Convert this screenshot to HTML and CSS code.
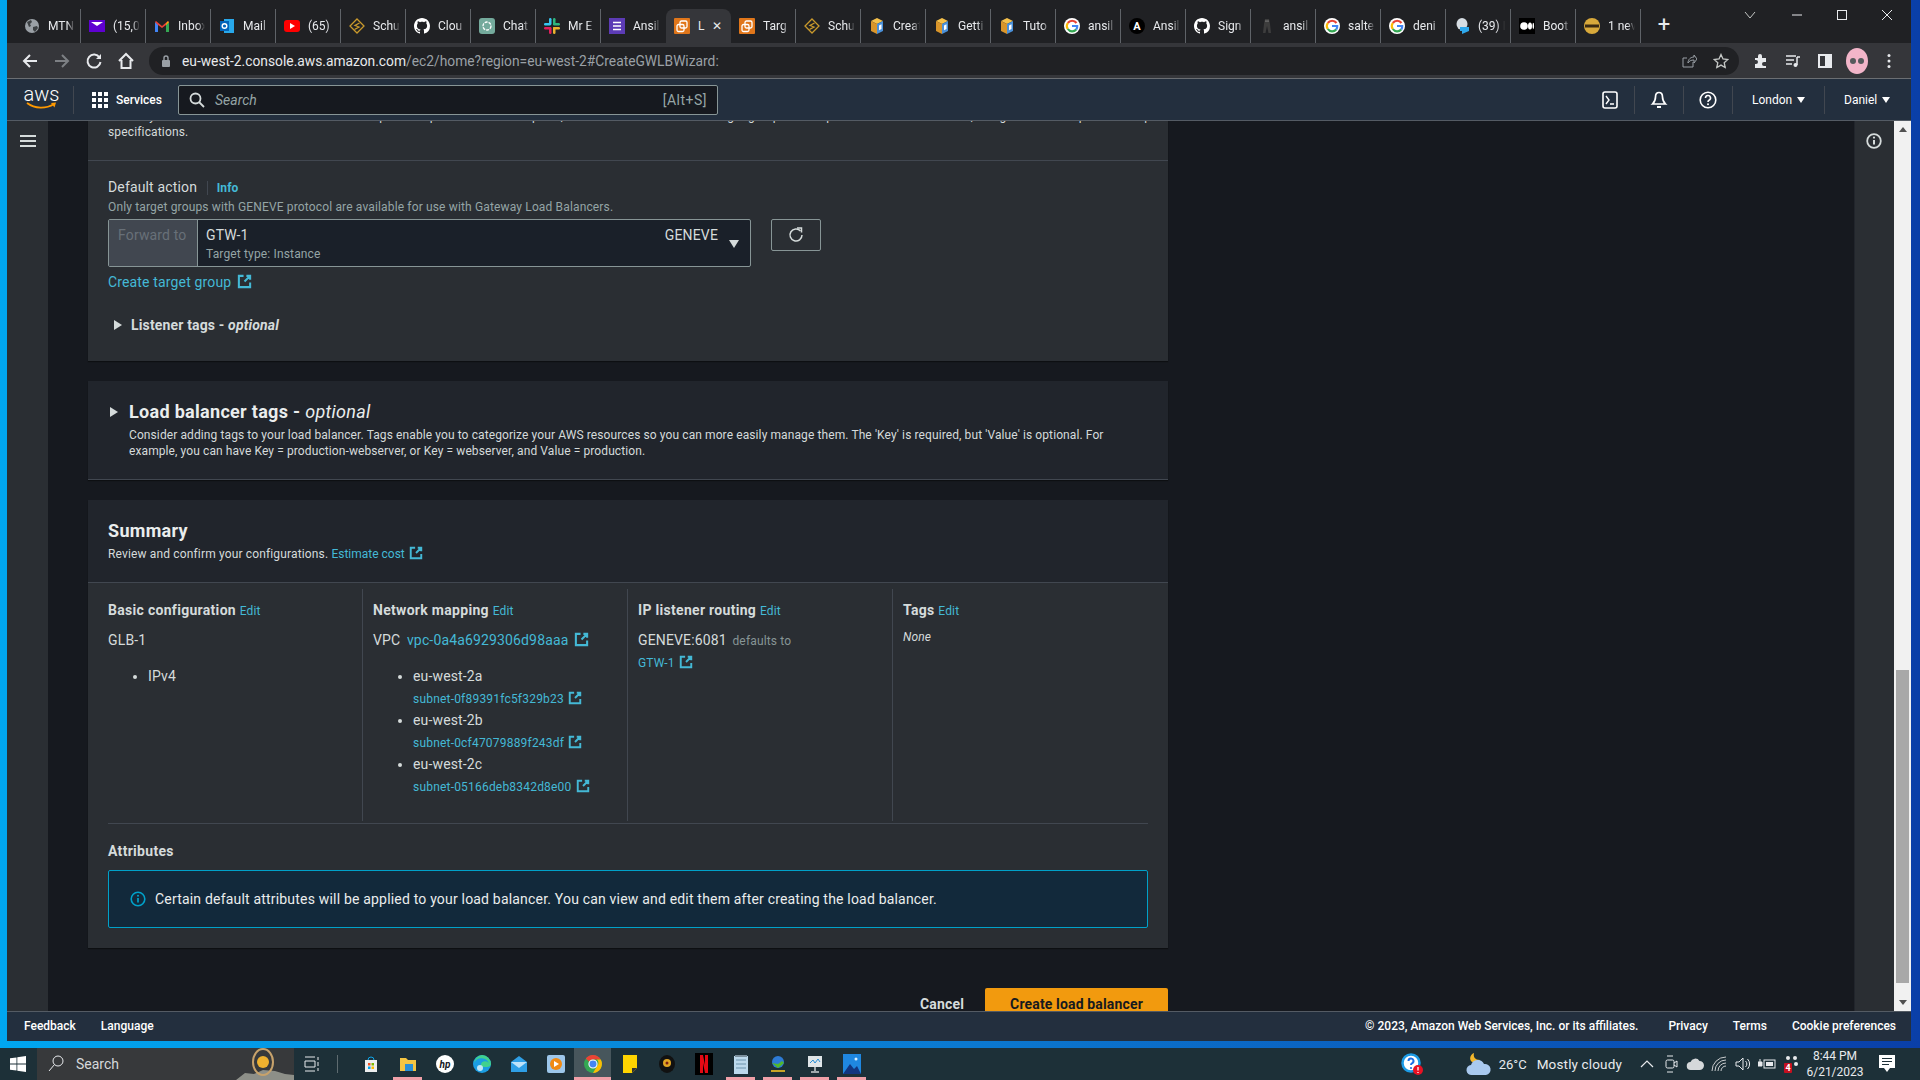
FILE: index.html
```html
<!DOCTYPE html>
<html lang="en">
<head>
	<meta charset="utf-8" />
	<title>Create load balancer</title>
	<link rel="stylesheet" href="styles.css">
</head>
<body>

	<!-- shared icons -->
	<svg class="defs" aria-hidden="true">
		<symbol id="ext" viewBox="0 0 16 16"><path d="M7 2H2v12h12V9M10 2h4v4M14 2L8 8" fill="none" stroke="currentColor" stroke-width="2.200"/></symbol>
		<symbol id="globe" viewBox="0 0 16 16"><circle cx="8" cy="8" r="7" fill="#9aa0a6"/><path d="M3 4l4-2 1 2-2 2 1 2-2 1zM9 9l4-1 1 2-3 4-2-2z" fill="#3c4043"/></symbol>
		<symbol id="yahoo" viewBox="0 0 16 16"><rect y="2" width="16" height="12" fill="#5f01d1"/><path d="M2 4h12L8 8z" fill="#fff"/></symbol>
		<symbol id="gmail" viewBox="0 0 16 16"><path d="M1 14V4l3 2v8z" fill="#4285f4"/><path d="M15 14V4l-3 2v8z" fill="#34a853"/><path d="M1 4l1-1 6 5 6-5 1 1-3 3-4 3-4-3z" fill="#ea4335"/><path d="M12 6l1.500-2.500L15 4l-3 3z" fill="#fbbc04"/></symbol>
		<symbol id="outlook" viewBox="0 0 16 16"><rect x="5" y="1" width="10" height="14" fill="#28a8ea"/><rect x="1" y="3" width="9" height="10" fill="#0364b8"/><circle cx="5.500" cy="8" r="2.300" fill="none" stroke="#fff" stroke-width="1.400"/></symbol>
		<symbol id="yt" viewBox="0 0 16 16"><rect y="2" width="16" height="12" rx="3" fill="#f00"/><path d="M6 5l5 3-5 3z" fill="#fff"/></symbol>
		<symbol id="schu" viewBox="0 0 16 16"><path d="M8 1l7 7-7 7-7-7z" fill="none" stroke="#c9992c" stroke-width="1.300"/><path d="M10.500 5L6 7.500l4 1.500-4.500 2.500" fill="none" stroke="#c9992c" stroke-width="1.300"/></symbol>
		<symbol id="github" viewBox="0 0 16 16"><path fill="#fff" d="M8 0C3.58 0 0 3.58 0 8c0 3.54 2.29 6.530 5.470 7.590.4.070.55-.17.55-.38 0-.19-.01-.82-.01-1.490-2.010.37-2.530-.49-2.690-.94-.09-.23-.48-.94-.82-1.130-.28-.15-.68-.52-.01-.53.63-.01 1.080.58 1.230.82.72 1.210 1.870.87 2.330.66.070-.52.28-.87.51-1.070-1.780-.2-3.640-.89-3.640-3.950 0-.87.31-1.590.82-2.150-.08-.2-.36-1.020.08-2.120 0 0 .67-.21 2.200.82.64-.18 1.320-.27 2-.27s1.360.09 2 .27c1.530-1.040 2.200-.82 2.200-.82.44 1.100.16 1.920.08 2.120.51.56.82 1.270.82 2.150 0 3.070-1.870 3.750-3.650 3.950.29.25.54.73.54 1.480 0 1.070-.01 1.930-.01 2.200 0 .21.15.46.55.38A8.010 8.010 0 0 0 16 8c0-4.420-3.580-8-8-8z"/></symbol>
		<symbol id="chat" viewBox="0 0 16 16"><rect width="16" height="16" rx="3" fill="#74aa9c"/><circle cx="8" cy="8" r="4" fill="none" stroke="#fff" stroke-width="1.300" stroke-dasharray="3 1"/></symbol>
		<symbol id="slack" viewBox="0 0 16 16"><rect x="5" y="0" width="2.500" height="7" rx="1.200" fill="#36c5f0"/><rect x="0" y="5" width="7" height="2.500" rx="1.200" fill="#36c5f0"/><rect x="9" y="0" width="2.500" height="7" rx="1.200" fill="#2eb67d"/><rect x="9" y="5" width="7" height="2.500" rx="1.200" fill="#2eb67d"/><rect x="9" y="9" width="2.500" height="7" rx="1.200" fill="#ecb22e"/><rect x="9" y="9" width="7" height="2.500" rx="1.200" fill="#ecb22e"/><rect x="5" y="9" width="2.500" height="7" rx="1.200" fill="#e01e5a"/><rect x="0" y="9" width="7" height="2.500" rx="1.200" fill="#e01e5a"/></symbol>
		<symbol id="list" viewBox="0 0 16 16"><rect width="16" height="16" fill="#5c3bb5"/><path d="M4 4.500h8M4 8h8M4 11.500h8" stroke="#fff" stroke-width="1.600"/></symbol>
		<symbol id="aws" viewBox="0 0 16 16"><rect width="16" height="16" rx="1" fill="#e0761a"/><rect x="6" y="3" width="7" height="7" rx="1.500" fill="none" stroke="#fff" stroke-width="1.300"/><rect x="3" y="6.500" width="7" height="7" rx="1.500" fill="none" stroke="#fff" stroke-width="1.300"/></symbol>
		<symbol id="box" viewBox="0 0 16 16"><path d="M2 3l6-3 6 3-6 3z" fill="#f5c14b"/><path d="M2 3l6 3v10l-6-3z" fill="#d9952a"/><path d="M14 3L8 6v10l6-3z" fill="#4a90d9"/><path d="M10 7.500l2.500-1.200V11L10 12.200z" fill="#fff"/></symbol>
		<symbol id="google" viewBox="0 0 16 16"><circle cx="8" cy="8" r="8" fill="#fff"/><path d="M12.500 5A5.300 5.300 0 0 0 3.800 5" fill="none" stroke="#ea4335" stroke-width="2.200"/><path d="M3.800 5a5.300 5.300 0 0 0 0 6" fill="none" stroke="#fbbc04" stroke-width="2.200"/><path d="M3.800 11a5.300 5.300 0 0 0 8.400.5" fill="none" stroke="#34a853" stroke-width="2.200"/><path d="M8 8h5.200a5.300 5.300 0 0 1-1 3.500" fill="none" stroke="#4285f4" stroke-width="2.200"/></symbol>
		<symbol id="figure" viewBox="0 0 16 16"><path d="M6 1h4l1 5 1 9H9.500L8 8l-1.500 7H4l1-9z" fill="#3d3d3d"/><circle cx="7" cy="3" r=".6" fill="#ccc"/><circle cx="9" cy="3" r=".6" fill="#ccc"/></symbol>
		<symbol id="bubble" viewBox="0 0 16 16"><ellipse cx="8" cy="6" rx="5.500" ry="6" fill="#d6dde3"/><path d="M6 9h9v4l-7 3v-3H6z" fill="#2fa8ec"/></symbol>
		<symbol id="medium" viewBox="0 0 16 16"><rect width="16" height="16" fill="#000"/><circle cx="5" cy="8" r="3.800" fill="#fff"/><ellipse cx="11" cy="8" rx="2" ry="3.600" fill="#fff"/><ellipse cx="14.300" cy="8" rx=".8" ry="3.200" fill="#fff"/></symbol>
		<symbol id="coin" viewBox="0 0 16 16"><circle cx="8" cy="8" r="8" fill="#d8a93b"/><rect x="1" y="6.500" width="14" height="3" fill="#3a2a12"/></symbol>
		<symbol id="chrome" viewBox="0 0 16 16"><circle cx="8" cy="8" r="8" fill="#34a853"/><path d="M8 0a8 8 0 0 1 6.900 4H8a4 4 0 0 0-3.500 2L1.600 3A8 8 0 0 1 8 0z" fill="#ea4335"/><path d="M14.900 4A8 8 0 0 1 8 16l3.500-6a4 4 0 0 0 0-6z" fill="#fbbc04"/><circle cx="8" cy="8" r="3.600" fill="#4285f4" stroke="#fff" stroke-width="1"/></symbol>
	</svg>

	<div class="window">

		<!-- browser tabs -->
		<div class="tabstrip">
			<div class="tab"><svg class="fav"><use href="#globe"/></svg><span>MTN</span></div>
			<div class="tab"><svg class="fav"><use href="#yahoo"/></svg><span>(15,0</span></div>
			<div class="tab"><svg class="fav"><use href="#gmail"/></svg><span>Inbox</span></div>
			<div class="tab"><svg class="fav"><use href="#outlook"/></svg><span>Mail</span></div>
			<div class="tab"><svg class="fav"><use href="#yt"/></svg><span>(65)</span></div>
			<div class="tab"><svg class="fav"><use href="#schu"/></svg><span>Schu</span></div>
			<div class="tab"><svg class="fav"><use href="#github"/></svg><span>Clou</span></div>
			<div class="tab"><svg class="fav"><use href="#chat"/></svg><span>Chat</span></div>
			<div class="tab"><svg class="fav"><use href="#slack"/></svg><span>Mr E</span></div>
			<div class="tab tab-before"><svg class="fav"><use href="#list"/></svg><span>Ansil</span></div>
			<div class="tab tab-active"><svg class="fav"><use href="#aws"/></svg><span>L</span><b class="tab-close">✕</b></div>
			<div class="tab"><svg class="fav"><use href="#aws"/></svg><span>Targ</span></div>
			<div class="tab"><svg class="fav"><use href="#schu"/></svg><span>Schu</span></div>
			<div class="tab"><svg class="fav"><use href="#box"/></svg><span>Creat</span></div>
			<div class="tab"><svg class="fav"><use href="#box"/></svg><span>Getti</span></div>
			<div class="tab"><svg class="fav"><use href="#box"/></svg><span>Tuto</span></div>
			<div class="tab"><svg class="fav"><use href="#google"/></svg><span>ansil</span></div>
			<div class="tab"><svg class="fav" viewBox="0 0 16 16"><circle cx="8" cy="8" r="8" fill="#000"/><text x="8" y="12" text-anchor="middle" font-family="Roboto, sans-serif" font-size="11" font-weight="700" fill="#fff">A</text></svg><span>Ansil</span></div>
			<div class="tab"><svg class="fav"><use href="#github"/></svg><span>Sign</span></div>
			<div class="tab"><svg class="fav"><use href="#figure"/></svg><span>ansil</span></div>
			<div class="tab"><svg class="fav"><use href="#google"/></svg><span>salte</span></div>
			<div class="tab"><svg class="fav"><use href="#google"/></svg><span>deni</span></div>
			<div class="tab"><svg class="fav"><use href="#bubble"/></svg><span>(39) I</span></div>
			<div class="tab"><svg class="fav"><use href="#medium"/></svg><span>Boot</span></div>
			<div class="tab"><svg class="fav"><use href="#coin"/></svg><span>1 nev</span></div>
			<div class="tab-new">+</div>
			<div class="win-controls">
				<svg width="12" height="12" viewBox="0 0 12 12"><path d="M1 3l5 6 5-6" fill="none" stroke="#c4c7c5"/></svg>
				<svg width="12" height="12" viewBox="0 0 12 12"><path d="M1 6h10" stroke="#e8eaed"/></svg>
				<svg width="12" height="12" viewBox="0 0 12 12"><rect x="1.500" y="1.500" width="9" height="9" fill="none" stroke="#e8eaed"/></svg>
				<svg width="12" height="12" viewBox="0 0 12 12"><path d="M1 1l10 10M11 1L1 11" stroke="#e8eaed"/></svg>
			</div>
		</div>

		<!-- browser toolbar -->
		<div class="toolbar">
			<div class="tool-btns">
				<svg width="18" height="18" viewBox="0 0 18 18"><path d="M16 9H3M9 3L3 9l6 6" fill="none" stroke="#e8eaed" stroke-width="2"/></svg>
				<svg width="18" height="18" viewBox="0 0 18 18"><path d="M2 9h13M9 3l6 6-6 6" fill="none" stroke="#7d8084" stroke-width="2"/></svg>
				<svg width="18" height="18" viewBox="0 0 18 18"><path d="M14.500 5.500A6.500 6.500 0 1 0 15.500 10" fill="none" stroke="#e8eaed" stroke-width="2"/><path d="M16 2v5h-5z" fill="#e8eaed"/></svg>
				<svg width="18" height="18" viewBox="0 0 18 18"><path d="M2 9l7-7 7 7M4.500 8v8h9V8" fill="none" stroke="#e8eaed" stroke-width="2"/></svg>
			</div>
			<div class="omnibox">
				<svg width="12" height="14" viewBox="0 0 12 14"><rect x="2" y="6" width="8" height="7" rx="1" fill="#9aa0a6"/><path d="M4 6V4a2 2 0 0 1 4 0v2" fill="none" stroke="#9aa0a6" stroke-width="1.400"/></svg>
				<span class="url"><b>eu-west-2.console.aws.amazon.com</b>/ec2/home?region=eu-west-2#CreateGWLBWizard:</span>
				<svg class="omni-share" width="16" height="16" viewBox="0 0 16 16"><path d="M12 9v5H2V5h4M7 10c0-4 3-6 6-6V2l3 4-3 4V7c-3 0-5 1-6 3z" fill="none" stroke="#9aa0a6"/></svg>
				<svg width="16" height="16" viewBox="0 0 16 16"><path d="M8 1.500l2 4.500 4.800.5-3.600 3.200 1 4.800L8 12.100l-4.200 2.400 1-4.800L1.200 6.500 6 6z" fill="none" stroke="#c4c7c5" stroke-width="1.300"/></svg>
			</div>
			<div class="tool-right">
				<svg width="16" height="16" viewBox="0 0 16 16"><path d="M2 5h3V3a2 2 0 0 1 4 0v2h4v4h-2a2 2 0 0 0 0 4h2v2H2v-4h1a2 2 0 0 0 0-4H2z" fill="#e8eaed"/></svg>
				<svg width="16" height="16" viewBox="0 0 16 16"><path d="M1 3h10M1 7h8M1 11h6" stroke="#e8eaed" stroke-width="1.500"/><path d="M12 4h3M12 4v8" stroke="#e8eaed" stroke-width="1.500"/><circle cx="10.500" cy="12" r="2" fill="#e8eaed"/></svg>
				<svg width="16" height="16" viewBox="0 0 16 16"><rect x="2" y="2" width="12" height="12" fill="none" stroke="#e8eaed" stroke-width="2"/><rect x="8" y="2" width="6" height="12" fill="#e8eaed"/></svg>
				<svg width="22" height="26" viewBox="0 0 22 26"><ellipse cx="11" cy="13" rx="11" ry="13" fill="#f2b5c9"/><circle cx="7" cy="13" r="3" fill="#55595c"/><circle cx="15" cy="13" r="3" fill="#55595c"/></svg>
				<svg width="4" height="16" viewBox="0 0 4 16"><circle cx="2" cy="2.500" r="1.500" fill="#e8eaed"/><circle cx="2" cy="8" r="1.500" fill="#e8eaed"/><circle cx="2" cy="13.500" r="1.500" fill="#e8eaed"/></svg>
			</div>
		</div>

		<!-- aws top nav -->
		<nav class="topnav">
			<div class="aws-logo">
				<span>aws</span>
				<svg width="31" height="8" viewBox="0 0 31 8"><path d="M1 1c8 6 19 6 27 1" fill="none" stroke="#f90" stroke-width="1.800"/><path d="M25 1l5-.5-1.500 5z" fill="#f90"/></svg>
			</div>
			<div class="services">
				<svg width="16" height="16" viewBox="0 0 16 16" fill="#fff"><rect width="4" height="4"/><rect x="6" width="4" height="4"/><rect x="12" width="4" height="4"/><rect y="6" width="4" height="4"/><rect x="6" y="6" width="4" height="4"/><rect x="12" y="6" width="4" height="4"/><rect y="12" width="4" height="4"/><rect x="6" y="12" width="4" height="4"/><rect x="12" y="12" width="4" height="4"/></svg>
				<span>Services</span>
			</div>
			<div class="nav-search">
				<svg width="16" height="16" viewBox="0 0 16 16"><circle cx="6.500" cy="6.500" r="5" fill="none" stroke="#d5dbdb" stroke-width="1.800"/><path d="M10 10l5 5" stroke="#d5dbdb" stroke-width="1.800"/></svg>
				<i>Search</i>
				<span>[Alt+S]</span>
			</div>
			<div class="nav-right">
				<div class="nav-item nav-icon"><svg width="16" height="18" viewBox="0 0 16 18"><rect x="1" y="1" width="14" height="16" rx="2" fill="none" stroke="#fff" stroke-width="1.600"/><path d="M4 5l3 4-3 4M8 13h4" fill="none" stroke="#fff" stroke-width="1.400"/></svg></div>
				<div class="nav-item nav-icon"><svg width="18" height="18" viewBox="0 0 18 18"><path d="M9 1.500c-2.500 0-3.500 2-3.500 4.500 0 3-1 5-3 7h13c-2-2-3-4-3-7 0-2.500-1-4.500-3.500-4.500z" fill="none" stroke="#fff" stroke-width="1.700"/><path d="M7 15h4v2H7z" fill="#fff"/></svg></div>
				<div class="nav-item nav-icon"><svg width="18" height="18" viewBox="0 0 18 18"><circle cx="9" cy="9" r="7.800" fill="none" stroke="#fff" stroke-width="1.600"/><path d="M6.500 7a2.500 2.500 0 1 1 3.500 2.300c-.7.400-1 .8-1 1.700" fill="none" stroke="#fff" stroke-width="1.600"/><circle cx="9" cy="13.300" r="1" fill="#fff"/></svg></div>
				<div class="nav-item nav-text">London <em></em></div>
				<div class="nav-item nav-text nav-last">Daniel <em></em></div>
			</div>
		</nav>

		<div class="console">
			<aside class="sidebar">
				<svg width="16" height="12" viewBox="0 0 16 12"><path d="M0 1h16M0 6h16M0 11h16" stroke="#d5dbdb" stroke-width="2"/></svg>
			</aside>

			<div class="content">
				<div class="scroll">

					<section class="panel">
						<p class="listener-desc clipped-line">Gateway Load Balancers have a listener that accepts all IP packets across all ports, and forwards traffic to the target group that is specified in the listener rule, using the GENEVE protocol on port 6081, as per the appliance</p>
						<p class="listener-desc">specifications.</p>
						<div class="listener-body">
							<div class="field-label">Default action <span class="info">Info</span></div>
							<div class="field-hint">Only target groups with GENEVE protocol are available for use with Gateway Load Balancers.</div>
							<div class="action-row">
								<div class="action-select">
									<div class="forward-to">Forward to</div>
									<div class="target">
										<div class="target-main"><span>GTW-1</span><span class="target-proto">GENEVE</span></div>
										<div class="target-type">Target type: Instance</div>
									</div>
									<em class="select-caret"></em>
								</div>
								<div class="refresh">
									<svg width="16" height="16" viewBox="0 0 16 16"><path d="M12.500 4A6 6 0 1 0 14 8" fill="none" stroke="#d5dbdb" stroke-width="1.500"/><path d="M9 1h4.500v4.500" fill="none" stroke="#d5dbdb" stroke-width="1.500"/></svg>
								</div>
							</div>
							<a class="link create-link">Create target group <svg class="ext-lg"><use href="#ext"/></svg></a>
							<div class="expander listener-tags"><em class="caret-right"></em><b>Listener tags - <i>optional</i></b></div>
						</div>
					</section>

					<section class="panel panel-head tags-panel">
						<div class="tags-title"><em class="caret-right"></em><h2>Load balancer tags - <i>optional</i></h2></div>
						<p class="tags-desc">Consider adding tags to your load balancer. Tags enable you to categorize your AWS resources so you can more easily manage them. The 'Key' is required, but 'Value' is optional. For example, you can have Key = production-webserver, or Key = webserver, and Value = production.</p>
					</section>

					<section class="panel summary">
						<header class="summary-head">
							<h2>Summary</h2>
							<p>Review and confirm your configurations. <a class="link">Estimate cost <svg class="ext-md"><use href="#ext"/></svg></a></p>
						</header>
						<div class="summary-body">
							<div class="columns">
								<div class="col">
									<h3>Basic configuration <a class="link">Edit</a></h3>
									<div class="value">GLB-1</div>
									<ul>
										<li>IPv4</li>
									</ul>
								</div>
								<div class="col">
									<h3>Network mapping <a class="link">Edit</a></h3>
									<div class="value">VPC <a class="link vpc">vpc-0a4a6929306d98aaa <svg class="ext-lg"><use href="#ext"/></svg></a></div>
									<ul>
										<li>eu-west-2a<a class="link subnet">subnet-0f89391fc5f329b23 <svg class="ext-md"><use href="#ext"/></svg></a></li>
										<li>eu-west-2b<a class="link subnet">subnet-0cf47079889f243df <svg class="ext-md"><use href="#ext"/></svg></a></li>
										<li>eu-west-2c<a class="link subnet">subnet-05166deb8342d8e00 <svg class="ext-md"><use href="#ext"/></svg></a></li>
									</ul>
								</div>
								<div class="col">
									<h3>IP listener routing <a class="link">Edit</a></h3>
									<div class="value">GENEVE:6081 <span class="muted">defaults to</span></div>
									<a class="link gtw">GTW-1 <svg class="ext-md"><use href="#ext"/></svg></a>
								</div>
								<div class="col">
									<h3>Tags <a class="link">Edit</a></h3>
									<div class="none">None</div>
								</div>
							</div>
							<h3 class="attr-title">Attributes</h3>
							<div class="alert">
								<svg width="16" height="16" viewBox="0 0 16 16"><circle cx="8" cy="8" r="6.800" fill="none" stroke="#00a1c9" stroke-width="1.600"/><path d="M8 7v4.500" stroke="#00a1c9" stroke-width="1.700"/><circle cx="8" cy="4.800" r="1" fill="#00a1c9"/></svg>
								<span>Certain default attributes will be applied to your load balancer. You can view and edit them after creating the load balancer.</span>
							</div>
						</div>
					</section>

					<div class="actions">
						<span class="cancel">Cancel</span>
						<span class="primary">Create load balancer</span>
					</div>

				</div>
			</div>

			<aside class="tools">
				<svg width="16" height="16" viewBox="0 0 16 16"><circle cx="8" cy="8" r="6.800" fill="none" stroke="#d5dbdb" stroke-width="1.800"/><path d="M8 7v4.500" stroke="#d5dbdb" stroke-width="2"/><circle cx="8" cy="4.600" r="1.100" fill="#d5dbdb"/></svg>
			</aside>

			<div class="scrollbar">
				<em class="sb-up"></em>
				<div class="sb-thumb"></div>
				<em class="sb-down"></em>
			</div>
		</div>

		<footer class="console-foot">
			<div class="foot-left"><span>Feedback</span><span>Language</span></div>
			<div class="foot-right"><span class="copyright">© 2023, Amazon Web Services, Inc. or its affiliates.</span><span>Privacy</span><span>Terms</span><span>Cookie preferences</span></div>
		</footer>
	</div>

	<!-- windows taskbar -->
	<div class="taskbar">
		<svg class="start" width="16" height="16" viewBox="0 0 16 16" fill="#fff"><path d="M0 2.300l6.500-.9v6.200H0zM7.300 1.300L16 0v7.600H7.300zM0 8.400h6.500v6.200L0 13.700zM7.300 8.400H16V16l-8.700-1.300z"/></svg>
		<div class="task-search">
			<svg width="16" height="18" viewBox="0 0 16 18"><circle cx="10" cy="6" r="5" fill="none" stroke="#e8eaed"/><path d="M6.500 9.500L1 16" stroke="#e8eaed"/></svg>
			<span>Search</span>
			<svg class="doodle" width="58" height="32" viewBox="0 0 58 32"><path d="M0 32l9-7 9 1 9-4 12 1 10 3 9 1v5z" fill="#8d8f88"/><ellipse cx="27" cy="14" rx="10" ry="13" fill="none" stroke="#c7a26b" stroke-width="2"/><circle cx="27" cy="14" r="6" fill="#eeb12f"/></svg>
		</div>
		<svg class="taskview" width="16" height="16" viewBox="0 0 16 16"><path d="M1 1h10M1 15h10M1 5h10v6H1zM14 1v3M14 6v4M14 12v3" fill="none" stroke="#e8eaed"/></svg>
		<div class="task-sep"></div>
		<div class="task-apps">
			<div class="app"><svg width="18" height="18" viewBox="0 0 18 18"><path d="M3 5h12v12H3z" fill="#eee"/><path d="M6 5a3 3 0 0 1 6 0" fill="none" stroke="#0ea5e9"/><rect x="6" y="8" width="2.500" height="2.500" fill="#f25022"/><rect x="9.500" y="8" width="2.500" height="2.500" fill="#7fba00"/><rect x="6" y="11.500" width="2.500" height="2.500" fill="#00a4ef"/><rect x="9.500" y="11.500" width="2.500" height="2.500" fill="#ffb900"/></svg></div>
			<div class="app app-open"><svg width="18" height="18" viewBox="0 0 18 18"><path d="M1 3h6l2 2h8v11H1z" fill="#f4c542"/><rect x="6" y="9" width="8" height="7" fill="#2a8fd6"/></svg></div>
			<div class="app"><svg width="18" height="18" viewBox="0 0 18 18"><circle cx="9" cy="9" r="9" fill="#fff"/><text x="9" y="12.500" text-anchor="middle" font-family="Roboto, sans-serif" font-size="10" font-weight="700" font-style="italic" fill="#16191f">hp</text></svg></div>
			<div class="app"><svg width="18" height="18" viewBox="0 0 18 18"><circle cx="9" cy="9" r="9" fill="#1b9de2"/><path d="M9 0a9 9 0 0 1 9 9c0 2-2 3-4 3H8a4 4 0 0 1 8-3A8 8 0 0 0 1 8a9 9 0 0 1 8-8z" fill="#41d18d"/><circle cx="7" cy="13" r="3" fill="#bfe6f7"/></svg></div>
			<div class="app"><svg width="18" height="18" viewBox="0 0 18 18"><path d="M1 7l8-6 8 6v10H1z" fill="#2f9fe6"/><path d="M1 7l8 6 8-6" fill="#bfe3fa"/></svg></div>
			<div class="app"><svg width="18" height="18" viewBox="0 0 18 18"><rect width="18" height="18" rx="2" fill="#9cc6ea"/><circle cx="9" cy="9" r="6" fill="#f08a12"/><path d="M7 6l5 3-5 3z" fill="#fff"/></svg></div>
			<div class="app app-active"><svg width="18" height="18"><use href="#chrome"/></svg></div>
			<div class="app"><svg width="18" height="18" viewBox="0 0 18 18"><path d="M2 0h14v13l-5 5H2z" fill="#ffd400"/><path d="M11 18v-5h5z" fill="#333"/></svg></div>
			<div class="app"><svg width="18" height="18" viewBox="0 0 18 18"><ellipse cx="9" cy="9" rx="8" ry="9" fill="#111"/><circle cx="9" cy="8" r="4" fill="#e0a423"/><circle cx="9" cy="8" r="1.500" fill="#7a1f12"/></svg></div>
			<div class="app"><svg width="18" height="22" viewBox="0 0 18 22"><rect width="18" height="22" fill="#000"/><path d="M5 2h3l2 10V2h3v18h-3L8 10v10H5z" fill="#e50914"/></svg></div>
			<div class="app app-open"><svg width="18" height="20" viewBox="0 0 18 20"><path d="M2 2h14v18H2z" fill="#bcd9ec"/><path d="M4 6h10M4 10h10M4 14h10" stroke="#6d94ad"/><path d="M3 1h12v2H3z" fill="#7b8f9c"/></svg></div>
			<div class="app app-open"><svg width="18" height="18" viewBox="0 0 18 18"><circle cx="9" cy="7" r="6" fill="#2d7bd6"/><path d="M3 8l6 5 6-5-2-2-4 3z" fill="#52b82c"/><path d="M2 15h14v2H2z" fill="#c7a426"/></svg></div>
			<div class="app app-open"><svg width="18" height="18" viewBox="0 0 18 18"><rect x="2" y="1" width="14" height="11" fill="#dfe5e8"/><path d="M4 8l3-3 2 3 3-4 2 3" fill="none" stroke="#2a8fd6"/><path d="M9 12v4M5 17h8" stroke="#c9cfd2" stroke-width="1.500"/></svg></div>
			<div class="app app-open"><svg width="18" height="20" viewBox="0 0 18 20"><rect width="18" height="20" fill="#1f87e0"/><path d="M0 20l7-10 4 5 3-3 4 8z" fill="#12357f"/><circle cx="13" cy="5" r="1.500" fill="#d9f0ff"/></svg></div>
		</div>
		<div class="tray">
			<svg class="tray-help" width="22" height="22" viewBox="0 0 22 22"><circle cx="10" cy="10" r="8.500" fill="#fff" stroke="#1c9be6" stroke-width="2.500"/><path d="M7.500 8a2.500 2.500 0 1 1 3.500 2.300c-.7.400-1 .8-1 1.700" fill="none" stroke="#1c6fe6" stroke-width="2"/><circle cx="10" cy="15" r="1.100" fill="#1c6fe6"/><circle cx="17" cy="17" r="5" fill="#e81123"/><path d="M17 14v3.500M17 19v1" stroke="#fff" stroke-width="1.300"/></svg>
			<svg class="tray-weather" width="26" height="24" viewBox="0 0 26 24"><path d="M8 1c-1 4 1 7 6 7-1 3-7 4-9 1S5 2 8 1z" fill="#f3b72b"/><path d="M6 23a5 5 0 0 1-1-10 7 7 0 0 1 13-1 5.500 5.500 0 0 1 2 11z" fill="#a9c9ef"/></svg>
			<span class="temp">26°C</span>
			<span class="cond">Mostly cloudy</span>
			<div class="tray-icons">
				<svg width="14" height="14" viewBox="0 0 14 14"><path d="M1 10l6-6 6 6" fill="none" stroke="#e8eaed" stroke-width="1.200"/></svg>
				<svg width="14" height="18" viewBox="0 0 14 18"><rect x="2" y="5" width="8" height="8" rx="1.500" fill="none" stroke="#e8eaed"/><path d="M10 8l3-2v6l-3-2M3 1h6M3 17h6" fill="none" stroke="#e8eaed"/></svg>
				<svg width="18" height="14" viewBox="0 0 18 14"><path d="M5 13a4 4 0 0 1-.5-8 5 5 0 0 1 9-1 4.500 4.500 0 0 1 0 9z" fill="#d5d8da"/></svg>
				<svg width="16" height="16" viewBox="0 0 16 16"><path d="M1 15a14 14 0 0 1 14-14M4 15A11 11 0 0 1 15 4M7 15a8 8 0 0 1 8-8M10 15a5 5 0 0 1 5-5" fill="none" stroke="#c9ccce"/></svg>
				<svg width="16" height="16" viewBox="0 0 16 16"><path d="M1 6h3l4-4v12l-4-4H1zM10.500 5a4 4 0 0 1 0 6M12.500 3a7 7 0 0 1 0 10" fill="none" stroke="#e8eaed"/></svg>
				<svg width="18" height="14" viewBox="0 0 18 14"><rect x="6" y="3" width="11" height="8" fill="none" stroke="#e8eaed"/><rect x="8" y="5" width="7" height="4" fill="#e8eaed"/><path d="M0 5h4v4H0zM2 2v3" stroke="#e8eaed" fill="#e8eaed"/></svg>
				<svg width="16" height="18" viewBox="0 0 16 18"><circle cx="5" cy="3" r="2" fill="#e8eaed"/><circle cx="12" cy="3" r="2" fill="#e8eaed"/><circle cx="13" cy="9" r="2" fill="#e8eaed"/><rect x="1" y="8" width="8" height="10" rx="1" fill="#c50f1f"/><text x="5" y="16" text-anchor="middle" font-family="Roboto, sans-serif" font-size="9" font-weight="700" fill="#fff">4</text></svg>
			</div>
			<div class="clock"><span>8:44 PM</span><span>6/21/2023</span></div>
			<svg class="notify" width="16" height="18" viewBox="0 0 16 18"><path d="M0 0h16v13h-5l-3 4-3-4H0z" fill="#fff"/><path d="M3 3.500h10M3 6.500h10M3 9.500h7" stroke="#1d3038"/></svg>
		</div>
	</div>

</body>
</html>
```

FILE: styles.css
```css
* {
	box-sizing: border-box;
}

body {
	margin: 0;
	width: 1920px;
	height: 1080px;
	overflow: hidden;
	background: linear-gradient(90deg, #00a6f0 0%, #0b79d0 50%, #0a3fa8 100%);
	font-family: Roboto, "Liberation Sans", sans-serif;
	font-size: 14px;
	color: #d5dbdb;
}

p, h2, h3, ul {
	margin: 0;
	padding: 0;
}

.defs {
	position: absolute;
	width: 0;
	height: 0;
}

.window {
	display: flex;
	flex-direction: column;
	width: 1904px;
	height: 1041px;
	margin-left: 7px;
	background: #16191f;
}


/*Chrome tabs*/
.tabstrip {
	display: flex;
	height: 43px;
	padding: 9px 0 0 9px;
	background: #202124;
	position: relative;
}
.tab {
	display: flex;
	align-items: center;
	width: 65px;
	height: 34px;
	padding: 0 5px 0 8px;
	color: #e8eaed;
	font-size: 12px;
	border-right: 1px solid #5f6368;
	background-clip: content-box;
}
.tab span {
	flex: 1;
	margin-left: 8px;
	overflow: hidden;
	white-space: nowrap;
	-webkit-mask-image: linear-gradient(90deg, #000 70%, transparent);
	mask-image: linear-gradient(90deg, #000 70%, transparent);
}
.tab-before {
	border-right-color: transparent;
}
.fav {
	flex: none;
	width: 16px;
	height: 16px;
}
.tab-active {
	border-right: none;
	border-radius: 8px 8px 0 0;
	background: #35363a;
	background-clip: border-box;
}
.tab-active span {
	-webkit-mask-image: none;
	mask-image: none;
}
.tab-close {
	font-size: 12px;
	font-weight: 400;
	margin-right: 4px;
}
.tab-new {
	width: 36px;
	margin-left: 5px;
	text-align: center;
	font-size: 22px;
	line-height: 32px;
	color: #e8eaed;
}
.win-controls {
	position: absolute;
	top: 9px;
	right: 18px;
	display: flex;
	gap: 33px;
}
.win-controls svg:first-child {
	margin-right: 2px;
}


/*Chrome toolbar*/
.toolbar {
	display: flex;
	align-items: center;
	height: 36px;
	background: #35363a;
	border-bottom: 1px solid #6b6e72;
}
.tool-btns {
	display: flex;
	gap: 14px;
	padding-left: 14px;
	width: 142px;
}
.omnibox {
	display: flex;
	align-items: center;
	width: 1590px;
	height: 28px;
	margin-top: 1px;
	padding-left: 11px;
	padding-right: 10px;
	border-radius: 14px;
	background: #202124;
	gap: 16px;
}
.url {
	flex: 1;
	margin-left: -6px;
	color: #9aa0a6;
	font-size: 13.8px;
}
.url b {
	font-weight: 400;
	color: #e8eaed;
}
.tool-right {
	display: grid;
	grid-auto-flow: column;
	grid-auto-columns: 32px;
	justify-items: center;
	align-items: center;
	padding-left: 6px;
}


/*AWS nav*/
.topnav {
	display: flex;
	align-items: center;
	height: 42px;
	background: #232f3e;
	border-bottom: 1px solid #545b64;
	position: relative;
	z-index: 2;
}
.aws-logo {
	display: flex;
	flex-direction: column;
	align-items: center;
	width: 67px;
	padding-left: 3px;
	height: 28px;
	border-right: 1px solid #414750;
	color: #fff;
	font-size: 20px;
	font-weight: 300;
	line-height: 17px;
}
.aws-logo svg {
	margin-top: -1px;
}
.services {
	display: flex;
	align-items: center;
	gap: 8px;
	width: 104px;
	padding-left: 18px;
	color: #fff;
	font-size: 12px;
	font-weight: 500;
}
.nav-search {
	display: flex;
	align-items: center;
	width: 540px;
	height: 30px;
	padding: 0 10px;
	border: 1px solid #879596;
	border-radius: 2px;
	background: #16191f;
	color: #95a5a6;
}
.nav-search i {
	flex: 1;
	margin-left: 10px;
}
.nav-search span {
	letter-spacing: 0.5px;
}
.nav-right {
	display: flex;
	align-items: center;
	margin-left: auto;
	height: 100%;
}
.nav-item {
	display: flex;
	align-items: center;
	height: 28px;
	color: #fff;
	font-size: 12px;
	border-right: 1px solid #414750;
}
.nav-icon {
	justify-content: center;
	width: 49px;
}
.nav-text {
	width: 92px;
	padding-left: 19px;
	gap: 1px;
}
.nav-last {
	border-right: none;
	width: 86px;
}
.nav-item em {
	width: 0;
	height: 0;
	border-left: 4px solid transparent;
	border-right: 4px solid transparent;
	border-top: 6px solid #fff;
	margin-left: 4px;
}


/*Console body*/
.console {
	flex: 1;
	display: flex;
	min-height: 0;
}
.sidebar {
	flex: none;
	width: 41px;
	padding: 14px 0 0 13px;
	background: #2a2e33;
}
.sidebar svg {
	display: block;
}
.content {
	flex: 1;
	min-width: 0;
	overflow: hidden;
	padding-left: 40px;
	letter-spacing: 0.15px;
}
.scroll {
	width: 1080px;
	margin-top: -13px;
}
.tools {
	flex: none;
	width: 40px;
	padding: 12px 0 0 11px;
	background: #2a2e33;
	border-left: 1px solid #21252c;
}
.scrollbar {
	flex: none;
	display: flex;
	flex-direction: column;
	align-items: center;
	width: 17px;
	background: #f1f1f1;
}
.sb-up, .sb-down {
	width: 0;
	height: 0;
	border-left: 4px solid transparent;
	border-right: 4px solid transparent;
}
.sb-up {
	margin-top: 6px;
	border-bottom: 5px solid #505050;
}
.sb-down {
	margin-top: auto;
	margin-bottom: 6px;
	border-top: 5px solid #505050;
}
.sb-thumb {
	width: 13px;
	height: 313px;
	margin-top: 538px;
	background: #a8a8a8;
}

.panel {
	margin-bottom: 20px;
	background: #2a2e33;
	box-shadow: 0 1px 1px rgba(0, 0, 0, 0.4);
}
.panel-head {
	background: #21252c;
}
.link {
	color: #44b9d6;
}
.ext-lg, .ext-md {
	display: inline-block;
	vertical-align: -2px;
	color: #44b9d6;
}
.ext-lg {
	width: 15px;
	height: 15px;
	margin-left: 2px;
}
.ext-md {
	width: 14px;
	height: 14px;
	margin-left: 1px;
}


/*Listener panel*/
.listener-desc {
	padding-left: 20px;
	font-size: 12px;
	line-height: 16px;
}
.clipped-line {
	white-space: nowrap;
	overflow: hidden;
	padding-right: 20px;
}
.listener-body {
	margin-top: 20px;
	padding: 16px 20px 25px;
	border-top: 1px solid #414750;
}
.field-label {
	line-height: 21px;
}
.info {
	margin-left: 6px;
	padding-left: 9px;
	border-left: 1px solid #414750;
	color: #44b9d6;
	font-size: 12px;
	font-weight: 700;
}
.field-hint {
	font-size: 12px;
	line-height: 16px;
	color: #95a5a6;
}
.action-row {
	display: flex;
	align-items: flex-start;
	margin-top: 4px;
}
.action-select {
	display: flex;
	width: 643px;
	height: 48px;
	border: 1px solid #879596;
	border-radius: 2px;
	background: #1a2029;
	position: relative;
}
.forward-to {
	width: 89px;
	padding: 5px 0 0 9px;
	line-height: 20px;
	background: #414750;
	border-right: 1px solid #879596;
	color: #687078;
}
.target {
	flex: 1;
	padding: 5px 32px 0 8px;
}
.target-main {
	display: flex;
	justify-content: space-between;
	line-height: 20px;
}
.target-type {
	margin-top: 1px;
	font-size: 12px;
	line-height: 16px;
	color: #95a5a6;
}
.select-caret {
	position: absolute;
	right: 11px;
	top: 20px;
	width: 0;
	height: 0;
	border-left: 5px solid transparent;
	border-right: 5px solid transparent;
	border-top: 8px solid #d5dbdb;
}
.refresh {
	display: flex;
	align-items: center;
	justify-content: center;
	width: 50px;
	height: 32px;
	margin-left: 20px;
	border: 1px solid #879596;
	border-radius: 2px;
}
.create-link {
	display: block;
	margin-top: 4px;
	line-height: 22px;
}
.expander {
	display: flex;
	align-items: center;
	line-height: 22px;
}
.listener-tags {
	margin-top: 21px;
	padding-left: 6px;
}
.listener-tags b {
	margin-left: 9px;
}
.caret-right {
	width: 0;
	height: 0;
	border-top: 5px solid transparent;
	border-bottom: 5px solid transparent;
	border-left: 8px solid #d5dbdb;
}


/*Tags panel*/
.tags-panel {
	padding: 19px 48px 20px 22px;
	border-bottom: 1px solid #414750;
}
.tags-title {
	display: flex;
	align-items: center;
	gap: 11px;
}
h2 {
	font-size: 18px;
	line-height: 24px;
	font-weight: 700;
	letter-spacing: 0.3px;
	color: #eaeded;
}
h2 i {
	font-weight: 400;
}
.tags-desc {
	margin: 3px 0 0 19px;
	font-size: 12px;
	line-height: 16px;
	letter-spacing: 0.1px;
}


/*Summary panel*/
.summary-head {
	padding: 19px 20px 20px;
	background: #21252c;
	border-bottom: 1px solid #414750;
}
.summary-head p {
	margin-top: 3px;
	font-size: 12px;
	line-height: 16px;
}
.summary-head .link {
	letter-spacing: 0;
}
.summary-body {
	padding: 6px 20px 20px;
}
.columns {
	display: grid;
	grid-template-columns: 254px 265px 265px 256px;
	height: 232px;
}
.col {
	padding: 10px 0 0 10px;
	border-left: 1px solid #414750;
}
.col:first-child {
	padding-left: 0;
	border-left: none;
}
h3 {
	font-size: 14px;
	line-height: 22px;
	font-weight: 700;
	letter-spacing: 0.3px;
	color: #d5dbdb;
}
h3 .link {
	font-size: 12px;
	font-weight: 400;
	letter-spacing: 0.15px;
}
.value {
	margin-top: 7px;
	line-height: 22px;
}
.vpc {
	margin-left: 3px;
}
.col ul {
	margin-top: 14px;
	padding-left: 40px;
}
.col li {
	line-height: 22px;
	margin-bottom: 2px;
}
.subnet {
	display: block;
	margin-top: 4px;
	font-size: 12px;
	line-height: 16px;
	letter-spacing: 0.2px;
}
.muted {
	font-size: 12px;
	color: #879596;
	margin-left: 2px;
}
.gtw {
	display: block;
	margin-top: 3px;
	font-size: 12px;
	line-height: 16px;
}
.none {
	margin-top: 6px;
	font-size: 12px;
	line-height: 18px;
	font-style: italic;
}
.attr-title {
	margin-top: 2px;
	padding-top: 16px;
	border-top: 1px solid #414750;
}
.alert {
	display: flex;
	align-items: center;
	gap: 9px;
	height: 58px;
	margin-top: 8px;
	padding-left: 21px;
	border: 1px solid #00a1c9;
	border-radius: 2px;
	background: #12293b;
	color: #eaeded;
	letter-spacing: 0.19px;
}


/*Wizard actions*/
.actions {
	display: flex;
	justify-content: flex-end;
	align-items: center;
	gap: 21px;
	margin-top: 40px;
	font-weight: 700;
}
.cancel {
	color: #d5dbdb;
}
.primary {
	display: block;
	width: 183px;
	height: 32px;
	line-height: 32px;
	text-align: center;
	background: #f29a0e;
	border-radius: 2px;
	color: #16191f;
}


/*Console footer*/
.console-foot {
	display: flex;
	justify-content: space-between;
	align-items: center;
	height: 30px;
	padding: 0 15px 2px 17px;
	background: #232f3e;
	border-top: 1px solid #545b64;
	position: relative;
	font-size: 12px;
	font-weight: 500;
	color: #fff;
}
.foot-left {
	display: flex;
	gap: 25px;
}
.foot-right {
	display: flex;
	gap: 25px;
}
.copyright {
	margin-right: 5px;
}


/*Windows taskbar*/
.taskbar {
	display: flex;
	align-items: center;
	height: 32px;
	margin-top: 7px;
	background: #1d3038;
	color: #e8eaed;
	position: relative;
}
.start {
	margin: 0 11px 0 10px;
}
.task-search {
	display: flex;
	align-items: center;
	width: 257px;
	height: 32px;
	padding-left: 11px;
	background: #37393b;
	position: relative;
}
.task-search span {
	margin-left: 12px;
	color: #d5d8da;
}
.doodle {
	position: absolute;
	right: 0;
	top: 0;
}
.taskview {
	margin-left: 10px;
}
.task-sep {
	width: 1px;
	height: 18px;
	margin-left: 17px;
	background: #5e6b70;
}
.task-apps {
	display: flex;
	margin-left: 14px;
	height: 32px;
}
.app {
	display: flex;
	align-items: center;
	justify-content: center;
	width: 37px;
	height: 32px;
	position: relative;
}
.app-active {
	background: #47565c;
}
.app-open::after, .app-active::after {
	content: "";
	position: absolute;
	left: 4px;
	right: 4px;
	bottom: 0;
	height: 3px;
	background: #f0a0a8;
}
.app-active::after {
	left: 0;
	right: 0;
}
.tray {
	display: flex;
	align-items: center;
	margin-left: auto;
	height: 32px;
}
.tray-weather {
	margin-left: 43px;
}
.temp {
	margin-left: 7px;
	font-size: 13px;
}
.cond {
	margin-left: 10px;
	font-size: 13.5px;
	letter-spacing: 0.15px;
}
.tray-icons {
	display: grid;
	grid-auto-flow: column;
	grid-auto-columns: 24px;
	justify-items: center;
	align-items: center;
	margin-left: 13px;
}
.clock {
	display: flex;
	flex-direction: column;
	align-items: center;
	width: 64px;
	font-size: 12px;
	line-height: 16px;
}
.notify {
	margin: 0 25px 0 12px;
}
```
